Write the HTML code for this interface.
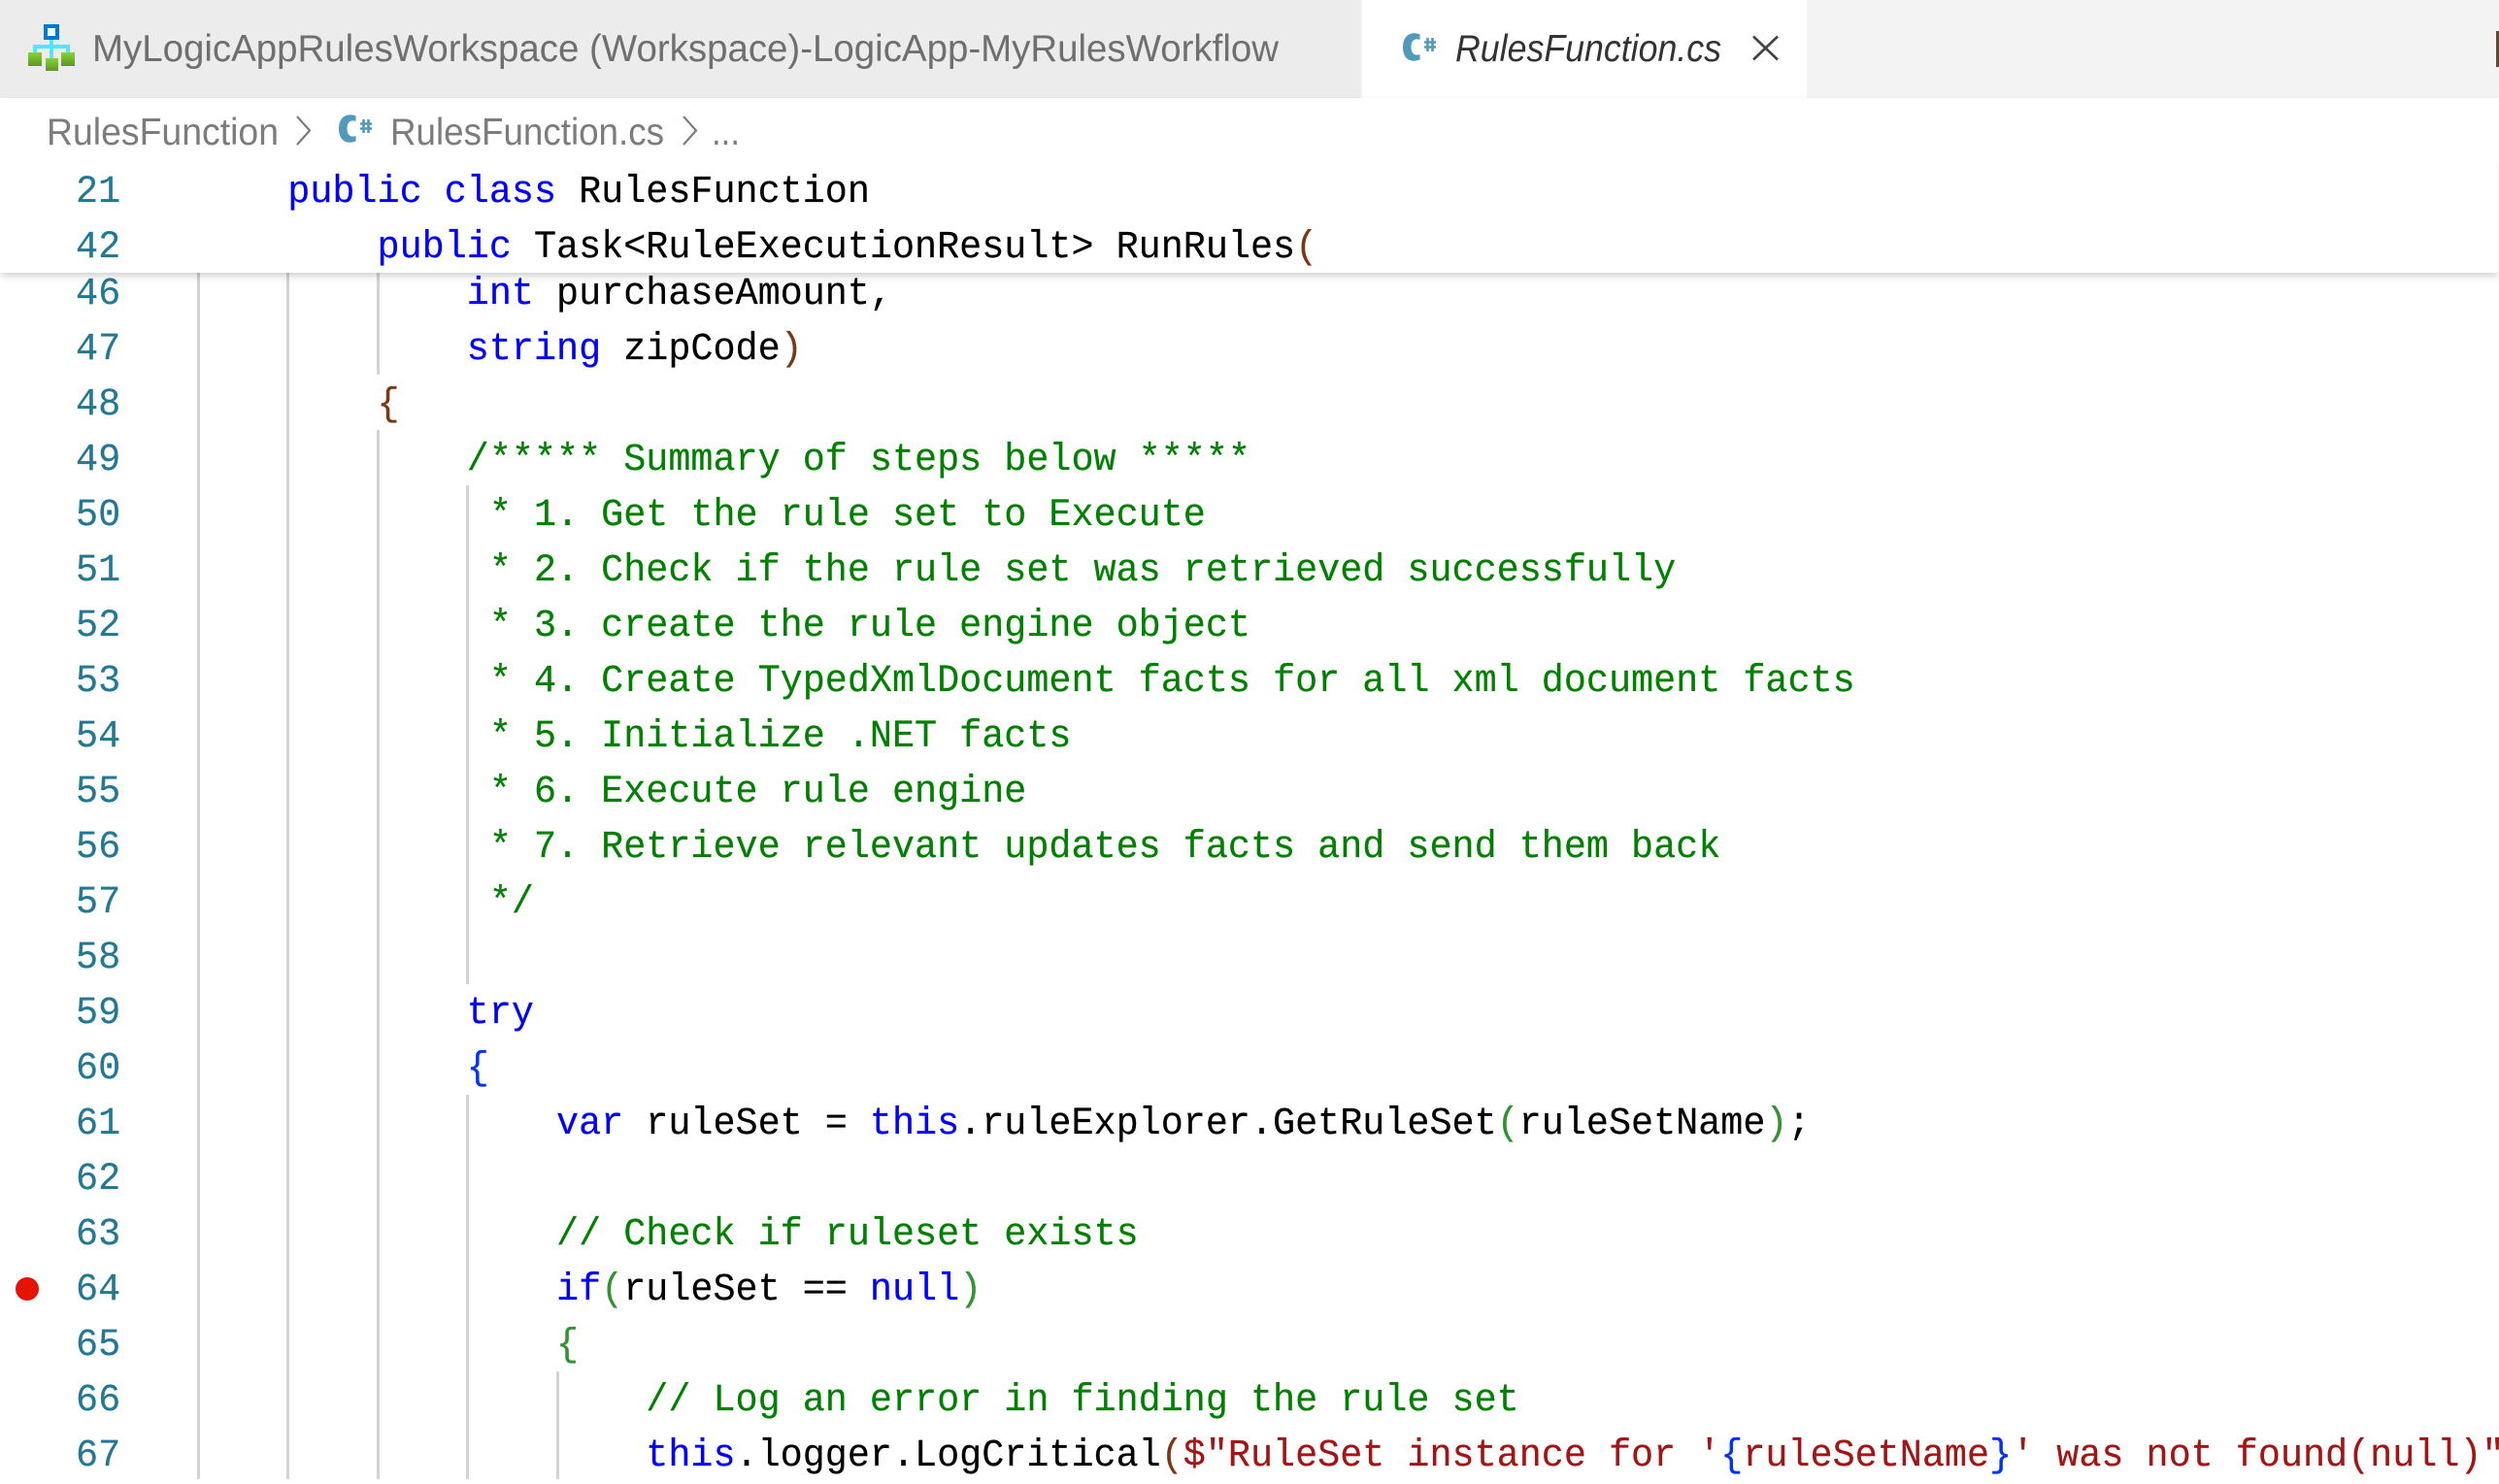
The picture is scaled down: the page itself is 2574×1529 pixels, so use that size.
<!DOCTYPE html>
<html><head><meta charset="utf-8"><style>
html,body{margin:0;padding:0;background:#fff;width:2574px;height:1524px;overflow:hidden}
.a{position:absolute}
.g{position:absolute;width:3px;background:#d3d3d3}
.l{position:absolute;left:204px;height:57px;margin-top:3px;font:40px/57px "Liberation Mono",monospace;white-space:pre;transform:scaleX(.9608);transform-origin:0 0;color:#000;-webkit-text-stroke:.2px}
.n{position:absolute;left:78px;height:57px;margin-top:3px;font:40px/57px "Liberation Mono",monospace;color:#237893;transform:scaleX(.9625);transform-origin:0 0;-webkit-text-stroke:.2px}
.k{color:#00f}.c{color:#008000}.s{color:#a31515}.b1{color:#7b3814}.b2{color:#319331}.b3{color:#0431fa}
</style></head><body>
<div class="a" style="left:0;top:0;width:2574px;height:101px;background:#f3f3f3"></div>
<div class="a" style="left:0;top:0;width:1401px;height:101px;background:#ececec"></div>
<div class="a" style="left:1403px;top:0;width:458px;height:101px;background:#fff"></div>
<div class="a" style="left:2571px;top:32px;width:3px;height:37px;background:#5a4a3a"></div>

<div class="g" style="left:203px;top:281px;height:1243px"></div>
<div class="g" style="left:295px;top:281px;height:1243px"></div>
<div class="g" style="left:388px;top:281px;height:105px"></div>
<div class="g" style="left:388px;top:443px;height:1081px"></div>
<div class="g" style="left:480px;top:500px;height:514px"></div>
<div class="g" style="left:480px;top:1128px;height:396px"></div>
<div class="g" style="left:573px;top:1413px;height:111px"></div>

<div class="n" style="top:272px">46</div><div class="l" style="top:272px">            <span class="k">int</span> purchaseAmount,</div>
<div class="n" style="top:329px">47</div><div class="l" style="top:329px">            <span class="k">string</span> zipCode<span class="b1">)</span></div>
<div class="n" style="top:386px">48</div><div class="l" style="top:386px">        <span class="b1">{</span></div>
<div class="n" style="top:443px">49</div><div class="l c" style="top:443px">            /***** Summary of steps below *****</div>
<div class="n" style="top:500px">50</div><div class="l c" style="top:500px">             * 1. Get the rule set to Execute</div>
<div class="n" style="top:557px">51</div><div class="l c" style="top:557px">             * 2. Check if the rule set was retrieved successfully</div>
<div class="n" style="top:614px">52</div><div class="l c" style="top:614px">             * 3. create the rule engine object</div>
<div class="n" style="top:671px">53</div><div class="l c" style="top:671px">             * 4. Create TypedXmlDocument facts for all xml document facts</div>
<div class="n" style="top:728px">54</div><div class="l c" style="top:728px">             * 5. Initialize .NET facts</div>
<div class="n" style="top:785px">55</div><div class="l c" style="top:785px">             * 6. Execute rule engine</div>
<div class="n" style="top:842px">56</div><div class="l c" style="top:842px">             * 7. Retrieve relevant updates facts and send them back</div>
<div class="n" style="top:899px">57</div><div class="l c" style="top:899px">             */</div>
<div class="n" style="top:956px">58</div>
<div class="n" style="top:1013px">59</div><div class="l k" style="top:1013px">            try</div>
<div class="n" style="top:1070px">60</div><div class="l b3" style="top:1070px">            {</div>
<div class="n" style="top:1127px">61</div><div class="l" style="top:1127px">                <span class="k">var</span> ruleSet = <span class="k">this</span>.ruleExplorer.GetRuleSet<span class="b2">(</span>ruleSetName<span class="b2">)</span>;</div>
<div class="n" style="top:1184px">62</div>
<div class="n" style="top:1241px">63</div><div class="l c" style="top:1241px">                // Check if ruleset exists</div>
<div class="n" style="top:1298px">64</div><div class="l" style="top:1298px">                <span class="k">if</span><span class="b2">(</span>ruleSet == <span class="k">null</span><span class="b2">)</span></div>
<div class="n" style="top:1355px">65</div><div class="l b2" style="top:1355px">                {</div>
<div class="n" style="top:1412px">66</div><div class="l c" style="top:1412px">                    // Log an error in finding the rule set</div>
<div class="n" style="top:1469px">67</div><div class="l" style="top:1469px">                    <span class="k">this</span>.logger.LogCritical<span class="b1">(</span><span class="s">$"RuleSet instance for '</span><span class="b3">{</span><span class="s">ruleSetName</span><span class="b3">}</span><span class="s">' was not found(null)"</span></div>

<div class="a" style="left:16px;top:1316px;width:24px;height:24px;border-radius:50%;background:#e51400"></div>

<div class="a" style="left:0;top:101px;width:2574px;height:180px;background:#fff;box-shadow:0 4px 8px -1px rgba(0,0,0,.2)"></div>
<div class="n" style="top:167px">21</div><div class="l" style="top:167px">    <span class="k">public</span> <span class="k">class</span> RulesFunction</div>
<div class="n" style="top:224px">42</div><div class="l" style="top:224px">        <span class="k">public</span> Task&lt;RuleExecutionResult&gt; RunRules<span class="b1">(</span></div>
<div class="a" style="left:2572px;top:167px;width:2px;height:114px;background:#f8f8f8"></div>

<svg class="a" style="left:0;top:0" width="2574" height="170" viewBox="0 0 2574 170" font-family="'Liberation Sans',sans-serif" font-size="39">
  <defs><linearGradient id="gr" x1="0" y1="0" x2="0" y2="1"><stop offset="0" stop-color="#86d633"/><stop offset="1" stop-color="#5e9624"/></linearGradient></defs>
  <!-- workspace icon -->
  <rect x="47" y="27" width="12" height="12" fill="#fff" stroke="#0078d4" stroke-width="4"/>
  <path d="M53 41V73" stroke="#50e6ff" stroke-width="4" fill="none"/>
  <path d="M36 56V48H70V56" stroke="#50e6ff" stroke-width="4" fill="none"/>
  <rect x="29" y="54" width="14" height="14" fill="url(#gr)"/>
  <rect x="47" y="60" width="13" height="13" fill="url(#gr)"/>
  <rect x="63" y="54" width="14" height="14" fill="url(#gr)"/>
  <text x="95" y="63" fill="#6f6f6f" textLength="1222" lengthAdjust="spacingAndGlyphs">MyLogicAppRulesWorkspace (Workspace)-LogicApp-MyRulesWorkflow</text>

  <!-- tab C# icon -->
  <g transform="translate(1445,34)">
    <path fill="#519aba" d="M17.5 1.2V7C12 5 8.5 8 8.5 14.5C8.5 21 12 24 17.5 22V27.5C8 31 0 27 0 14.5C0 2.5 8 -2 17.5 1.2Z"/>
    <path fill="none" stroke="#519aba" stroke-width="2.6" d="M25.5 5V19M30.5 5V19M22 9.5H34M22 14.5H34"/>
  </g>
  <text x="1499" y="63" fill="#333" font-style="italic" textLength="274" lengthAdjust="spacingAndGlyphs">RulesFunction.cs</text>
  <path d="M1806 37.5L1831 61.5M1831 37.5L1806 61.5" stroke="#424242" stroke-width="2.6" fill="none"/>

  <!-- breadcrumbs -->
  <text x="48" y="149" fill="#7c7c7c" textLength="239" lengthAdjust="spacingAndGlyphs">RulesFunction</text>
  <path d="M306 120L319 134.5L306 149" stroke="#7c7c7c" stroke-width="2.2" fill="none"/>
  <g transform="translate(349,118)">
    <path fill="#519aba" d="M17.5 1.2V7C12 5 8.5 8 8.5 14.5C8.5 21 12 24 17.5 22V27.5C8 31 0 27 0 14.5C0 2.5 8 -2 17.5 1.2Z"/>
    <path fill="none" stroke="#519aba" stroke-width="2.6" d="M25.5 5V19M30.5 5V19M22 9.5H34M22 14.5H34"/>
  </g>
  <text x="402" y="149" fill="#7c7c7c" textLength="282" lengthAdjust="spacingAndGlyphs">RulesFunction.cs</text>
  <path d="M704 120L717 134.5L704 149" stroke="#7c7c7c" stroke-width="2.2" fill="none"/>
  <text x="733" y="149" fill="#7c7c7c" textLength="29" lengthAdjust="spacingAndGlyphs">...</text>
</svg>
</body></html>
